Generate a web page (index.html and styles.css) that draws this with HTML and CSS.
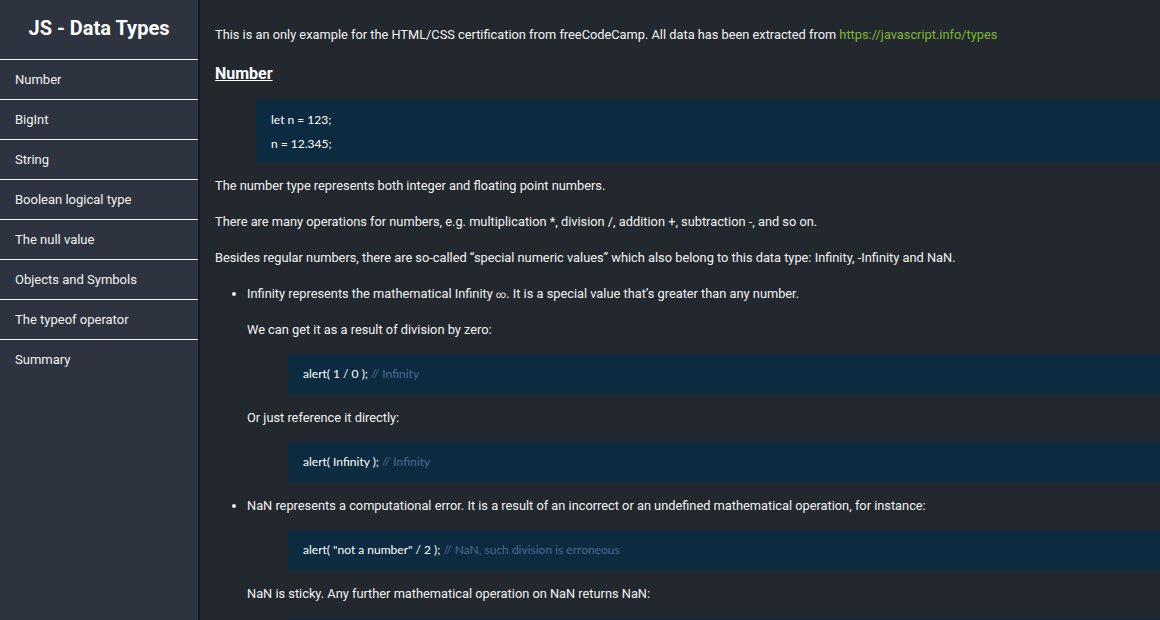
FILE: index.html
```html
<!DOCTYPE html>
<html lang="en">
<head>
<meta charset="utf-8">
<title>JS - Data Types</title>
<link rel="stylesheet" href="styles.css">
</head>
<body>
<div class="page">
  <nav class="navbar">
    <header class="nav-title">JS - Data Types</header>
    <a class="nav-link" href="#Number">Number</a>
    <a class="nav-link" href="#BigInt">BigInt</a>
    <a class="nav-link" href="#String">String</a>
    <a class="nav-link" href="#Boolean">Boolean logical type</a>
    <a class="nav-link" href="#null">The null value</a>
    <a class="nav-link" href="#Objects">Objects and Symbols</a>
    <a class="nav-link" href="#typeof">The typeof operator</a>
    <a class="nav-link last" href="#Summary">Summary</a>
  </nav>
  <main class="main">
    <p class="intro">This is an only example for the HTML/CSS certification from freeCodeCamp. All data has been extracted from <a class="ext" href="#">https://javascript.info/types</a></p>
    <section class="section" id="Number">
      <h2 class="sec-title">Number</h2>
      <div class="code multi"><div>let n = 123;</div><div>n = 12.345;</div></div>
      <p>The number type represents both integer and floating point numbers.</p>
      <p>There are many operations for numbers, e.g. multiplication *, division /, addition +, subtraction -, and so on.</p>
      <p>Besides regular numbers, there are so-called “special numeric values” which also belong to this data type: Infinity, -Infinity and NaN.</p>
      <ul class="list">
        <li>
          Infinity represents the mathematical Infinity <span class="inf">∞</span>. It is a special value that’s greater than any number.
          <p>We can get it as a result of division by zero:</p>
          <div class="code"><div>alert( 1 / 0 ); <span class="cm">// Infinity</span></div></div>
          <p>Or just reference it directly:</p>
          <div class="code"><div>alert( Infinity ); <span class="cm">// Infinity</span></div></div>
        </li>
        <li>
          NaN represents a computational error. It is a result of an incorrect or an undefined mathematical operation, for instance:
          <div class="code"><div>alert( "not a number" / 2 ); <span class="cm">// NaN, such division is erroneous</span></div></div>
          <p>NaN is sticky. Any further mathematical operation on NaN returns NaN:</p>
          <div class="code"><div>alert( NaN + 1 ); <span class="cm">// NaN</span></div></div>
        </li>
      </ul>
    </section>
  </main>
</div>
</body>
</html>
```

FILE: styles.css
```css
html, body {
  margin: 0;
  padding: 0;
  height: 100%;
  overflow: hidden;
}

body {
  background: #23282f;
  color: #f2f2f2;
  font-family: Roboto, "Liberation Sans", Arial, sans-serif;
  font-size: 12.8px;
}

.page {
  display: flex;
  height: 100%;
}

.navbar {
  flex: 0 0 198px;
  display: flex;
  flex-direction: column;
  background: #2d3440;
  border-right: 2px solid #16191d;
}

.nav-title {
  height: 60px;
  box-sizing: border-box;
  display: flex;
  align-items: center;
  justify-content: center;
  padding-bottom: 3px;
  font-size: 20px;
  font-weight: 700;
  color: #ffffff;
  border-bottom: 1px solid #f2f2f2;
}

.nav-link {
  display: flex;
  align-items: center;
  height: 40px;
  box-sizing: border-box;
  padding-left: 15px;
  padding-bottom: 1px;
  font-size: 13px;
  color: #f2f2f2;
  text-decoration: none;
  border-bottom: 1px solid #f2f2f2;
}

.nav-link.last {
  border-bottom: none;
}

.main {
  flex: 1;
  padding: 11px 0 0 15px;
  overflow: hidden;
}

p {
  margin: 12px 0;
  line-height: 24px;
}

.ext {
  color: #7cb82f;
  text-decoration: none;
}

.sec-title {
  margin: 15px 0 14px;
  font-size: 16px;
  line-height: 24px;
  font-weight: 700;
  text-decoration: underline;
  color: #ffffff;
}

.code {
  margin: 12px 0 12px 41px;
  padding: 8px 15px;
  background: #0c2a40;
  font-family: Lato, "Noto Sans", sans-serif;
  font-size: 12px;
  line-height: 24px;
  color: #ffffff;
}

.code.multi {
  padding: 8px 15px 6px;
}

.cm {
  color: #4d6b90;
}

.inf {
  font-size: 10px;
}

.list {
  margin: 12px 0;
  padding-left: 32px;
  line-height: 24px;
}

.list li {
  margin: 0;
}

.list p {
  margin-top: 11px;
}
```
